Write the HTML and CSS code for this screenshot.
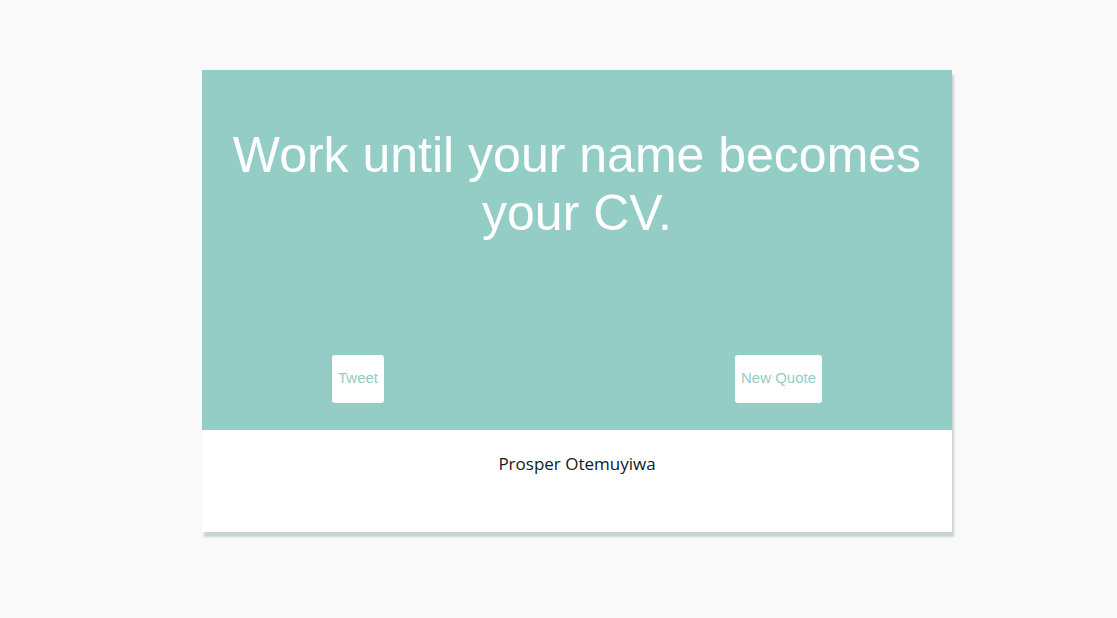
FILE: index.html
```html
<!DOCTYPE html>
<html>
<head>
<meta charset="utf-8">
<link rel="stylesheet" href="styles.css">
</head>
<body>
<div class="card">
  <div class="quote-box">
    <h1 class="quote">Work until your name becomes your CV.</h1>
    <div class="actions">
      <button class="btn">Tweet</button>
      <button class="btn">New Quote</button>
    </div>
  </div>
  <div class="author">Prosper Otemuyiwa</div>
</div>
</body>
</html>
```
FILE: styles.css
```css
html, body {
  margin: 0;
  padding: 0;
  background: #f9f9f9;
}
body {
  padding-bottom: 80px;
}
.card {
  width: 750px;
  margin: 70px 0 0 202px;
  background: #fff;
  box-shadow: 2px 5px 2px rgba(140, 165, 162, 0.45);
}
.quote-box {
  background: #94ccc6;
  height: 360px;
  box-sizing: border-box;
  padding-top: 57px;
  display: flex;
  flex-direction: column;
}
.quote {
  margin: 0;
  padding: 0 10px;
  font-family: "Liberation Sans", Arial, sans-serif;
  font-weight: normal;
  font-size: 50px;
  line-height: 57.6px;
  color: #fff;
  text-align: center;
}
.actions {
  margin-top: auto;
  margin-bottom: 27px;
  display: flex;
  justify-content: space-between;
  padding: 0 130px;
}
.btn {
  height: 48px;
  padding: 0 6px 3px;
  border: none;
  border-radius: 3px;
  background: #fff;
  color: #94ccc6;
  font-family: "Liberation Sans", Arial, sans-serif;
  font-size: 15px;
}
.author {
  height: 102px;
  box-sizing: border-box;
  padding-top: 23px;
  text-align: center;
  font-family: "Open Sans", "Noto Sans", sans-serif;
  font-size: 17px;
  line-height: 22px;
  color: #102020;
}
```
